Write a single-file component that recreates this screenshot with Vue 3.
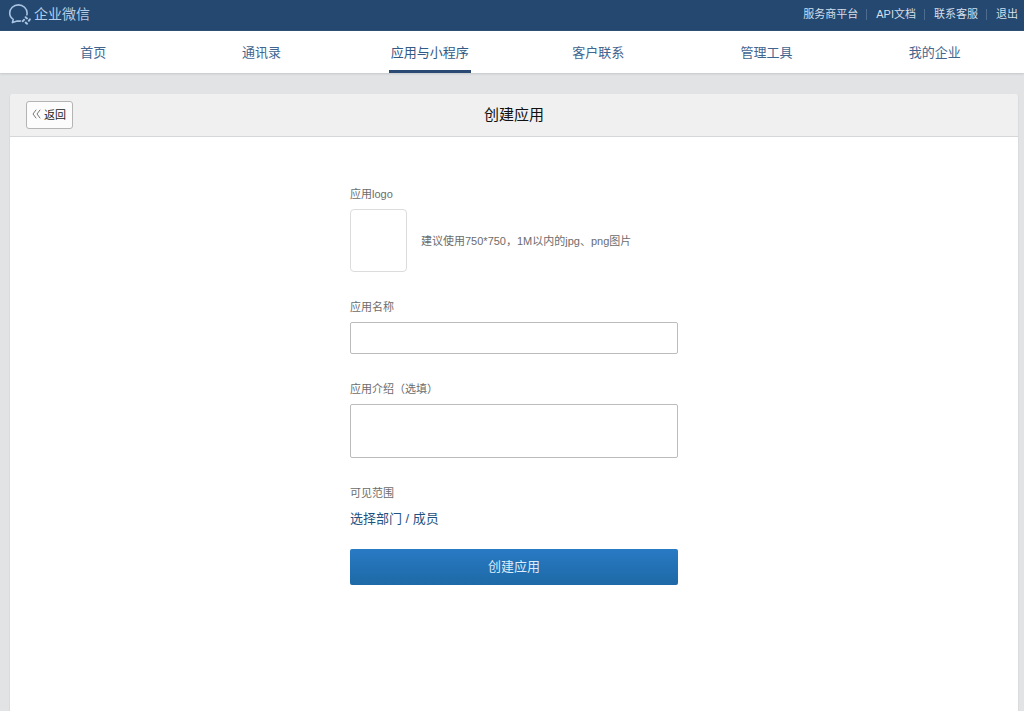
<script setup>
import { ref } from 'vue'

const navItems = ['首页', '通讯录', '应用与小程序', '客户联系', '管理工具', '我的企业']
const active = ref('应用与小程序')
const topLinks = ['服务商平台', 'API文档', '联系客服', '退出']
const name = ref('')
const intro = ref('')
</script>

<template>
  <div class="page">
    <header class="topbar">
      <a class="brand" href="#">
        <svg class="logo" viewBox="0 0 25 24" aria-hidden="true">
          <path d="M13.6 19C12.5 19.2 11.3 19.2 10.2 19L5.4 20.6L6.2 17.4C4 15.9 2.7 13.7 2.7 11.1C2.7 6.5 6.6 2.9 11.4 2.9C16.2 2.9 20.1 6.5 20.1 11.1C20.1 11.7 20 12.3 19.9 12.8" />
          <path class="fine" d="M18.6 15.2L20 16.4M22.9 17.3L21.8 18.8M20.1 21.7L18.7 20.6M15.8 19.2L17 17.8" />
        </svg>
        <span>企业微信</span>
      </a>
      <ul class="toplinks">
        <li v-for="link in topLinks" :key="link"><a href="#">{{ link }}</a></li>
      </ul>
    </header>

    <nav class="nav">
      <a
        v-for="item in navItems"
        :key="item"
        href="#"
        :class="{ active: item === active }"
        @click.prevent="active = item"
      ><span>{{ item }}</span></a>
    </nav>

    <main class="card">
      <div class="card-head">
        <button class="back" type="button">
          <svg viewBox="0 0 9 10" aria-hidden="true"><path d="M4.2 .7L1 5L4.2 9.3M8.2 .7L5 5L8.2 9.3" /></svg>
          <span>返回</span>
        </button>
        <h1>创建应用</h1>
      </div>

      <form class="form" @submit.prevent>
        <div class="field">
          <label for="logo">应用logo</label>
          <div class="upload">
            <button id="logo" class="logo-box" type="button"></button>
            <span class="hint">建议使用750*750，1M以内的jpg、png图片</span>
          </div>
        </div>
        <div class="field">
          <label for="name">应用名称</label>
          <input id="name" v-model="name" type="text" />
        </div>
        <div class="field">
          <label for="intro">应用介绍（选填）</label>
          <textarea id="intro" v-model="intro"></textarea>
        </div>
        <div class="field scope">
          <span class="label">可见范围</span>
          <a href="#">选择部门 / 成员</a>
        </div>
        <button class="submit" type="submit">创建应用</button>
      </form>
    </main>
  </div>
</template>

<style>
body {
  background: #e1e3e5;
}
</style>

<style scoped>
.page {
  display: flex;
  flex-direction: column;
  min-height: 100vh;
  font-family: "Liberation Sans", "Noto Sans CJK SC", sans-serif;
  font-size: 11px;
  color: #6c6c6c;
}
.page * {
  box-sizing: border-box;
}
a {
  text-decoration: none;
}
button,
input,
textarea {
  font-family: inherit;
}
.topbar {
  display: flex;
  align-items: center;
  justify-content: space-between;
  height: 31px;
  padding: 0 6px 3px 7px;
  background: #24486f;
}
.brand {
  display: flex;
  align-items: center;
  gap: 2px;
  font-size: 14px;
  line-height: 20px;
  color: #b5cde8;
}
.logo {
  width: 25px;
  height: 24px;
  fill: none;
  stroke: #a9c4e2;
  stroke-width: 1.6;
  stroke-linejoin: round;
  stroke-linecap: round;
}
.fine {
  stroke-width: 2;
}
.toplinks {
  display: flex;
  margin: 0;
  padding: 0;
  list-style: none;
  line-height: 16px;
}
.toplinks li {
  display: flex;
  align-items: center;
}
.toplinks li + li::before {
  content: "";
  width: 1px;
  height: 11px;
  margin: 0 9px 0 8px;
  background: #4d6c8f;
}
.toplinks a {
  color: #d3dfec;
}
.nav {
  display: grid;
  grid-template-columns: repeat(6, 1fr);
  height: 42px;
  padding: 0 5px 0 9px;
  background: #fff;
  box-shadow: 0 1px 2px #c4c7ca;
}
.nav a {
  display: flex;
  justify-content: center;
  font-size: 13px;
  line-height: 34px;
  color: #42658f;
}
.nav span {
  padding: 5px 2px 0;
  border-bottom: 3px solid transparent;
}
.nav .active {
  color: #335985;
}
.nav .active span {
  border-bottom-color: #2a4a73;
}
.card {
  flex: 1;
  margin: 21px 5px 0 9px;
  background: #fff;
  border: 1px solid #d9dbdd;
  border-width: 0 1px;
  border-radius: 4px 4px 0 0;
}
.card-head {
  display: grid;
  grid-template-columns: 1fr auto 1fr;
  align-items: center;
  height: 43px;
  padding: 0 16px;
  background: #f0f0f0;
  border-bottom: 1px solid #d5d7d9;
  border-radius: 4px 4px 0 0;
}
.back {
  display: flex;
  align-items: center;
  justify-self: start;
  gap: 3px;
  height: 28px;
  padding: 0 6px 2px 5px;
  font-size: 11px;
  color: #222;
  background: #fcfcfc;
  border: 1px solid #b4b4b4;
  border-radius: 3px;
}
.back svg {
  width: 9px;
  height: 10px;
  fill: none;
  stroke: #777;
  stroke-width: 1;
}
h1 {
  margin: 0;
  font-size: 15px;
  font-weight: 400;
  line-height: 22px;
  color: #111;
}
.form {
  width: 328px;
  max-width: 100%;
  margin: 0 auto;
  padding: 48px 0;
}
.field {
  display: flex;
  flex-direction: column;
  gap: 6px;
  margin-bottom: 26px;
}
.field label,
.label {
  line-height: 18px;
}
.upload {
  display: flex;
  align-items: center;
  gap: 14px;
}
.hint {
  padding-bottom: 2px;
}
.logo-box {
  width: 57px;
  height: 63px;
  padding: 0;
  background: #fff;
  border: 1px solid #dcdcdc;
  border-radius: 4px;
}
input,
textarea {
  display: block;
  width: 100%;
  height: 32px;
  padding: 4px 8px;
  font-size: 13px;
  color: #333;
  background: #fff;
  border: 1px solid #bcbcbc;
  border-radius: 2px;
}
textarea {
  height: 54px;
  resize: none;
}
.scope {
  align-items: flex-start;
  gap: 7px;
  margin-bottom: 20px;
}
.scope a {
  font-size: 13px;
  line-height: 20px;
  color: #1f5280;
}
.submit {
  width: 100%;
  height: 36px;
  padding: 0 0 3px;
  font-size: 13px;
  color: #dcebf8;
  background: linear-gradient(#287ac4, #1e69a6);
  border: 0;
  border-radius: 2px;
}
</style>
